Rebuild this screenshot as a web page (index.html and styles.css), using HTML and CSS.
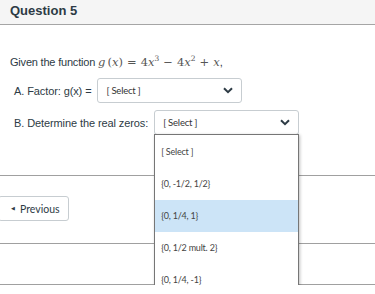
FILE: index.html
```html
<!DOCTYPE html>
<html lang="en">
<head>
    <meta charset="UTF-8">
    <meta name="viewport" content="width=device-width, initial-scale=1.0">
    <title>Question 5</title>
    <link rel="stylesheet" href="styles.css">
</head>
<body>
    <div class="question">
        <div class="question-header">Question 5</div>

        <div class="question-body">
            <p class="prompt">Given the function <span class="math"><i>g</i>&thinsp;(<i>x</i>)<span class="op">=</span>4<i>x</i><sup>3</sup><span class="op">&minus;</span>4<i>x</i><sup>2</sup><span class="op">+</span><i>x</i></span>,</p>

            <div class="answer-row">
                <span class="answer-label">A. Factor: g(x) =</span>
                <div class="select">
                    <span>[ Select ]</span>
                    <svg class="chevron" width="10" height="7" viewBox="0 0 10 7"><path d="M1 1.2 L5 5.2 L9 1.2" fill="none" stroke="#2d3b45" stroke-width="2"/></svg>
                </div>
            </div>

            <div class="answer-row">
                <span class="answer-label">B. Determine the real zeros:</span>
                <div class="select open">
                    <span>[ Select ]</span>
                    <svg class="chevron" width="10" height="7" viewBox="0 0 10 7"><path d="M1 1.2 L5 5.2 L9 1.2" fill="none" stroke="#2d3b45" stroke-width="2"/></svg>

                    <!-- open option list -->
                    <ul class="options">
                        <li>[ Select ]</li>
                        <li>{0, -1/2, 1/2}</li>
                        <li class="hover">{0, 1/4, 1}</li>
                        <li>{0, 1/2 mult. 2}</li>
                        <li>{0, 1/4, -1}</li>
                    </ul>
                </div>
            </div>
        </div>
    </div>

    <hr class="divider first">

    <div class="nav">
        <button class="nav-btn"><span class="arrow">&#9664;</span> Previous</button>
    </div>

    <hr class="divider">
    <hr class="divider last">
</body>
</html>
```

FILE: styles.css
```css
* {
    margin: 0;
    padding: 0;
    box-sizing: border-box;
}

body {
    font-family: 'Liberation Sans', Arial, sans-serif;
    color: #2d3b45;
    background: #fff;
    overflow: hidden;
}

.question-header {
    height: 25px;
    padding: 3px 10px 0;
    background: #f5f5f5;
    border-bottom: 1px solid #a5a5a5;
    font-size: 13px;
    font-weight: bold;
    line-height: 16px;
    color: #2d3b45;
}

.question-body {
    padding: 29px 10px 0;
    font-size: 11px;
}

.prompt {
    line-height: 16px;
    margin-bottom: 8px;
    letter-spacing: -0.2px;
}

.math {
    font-family: 'DejaVu Serif', 'Liberation Serif', serif;
    font-size: 11.5px;
    color: #555;
    letter-spacing: 0;
}

.math .op {
    margin: 0 4px;
}

.math sup {
    font-size: 7.5px;
    vertical-align: 5px;
    line-height: 0;
}

.answer-row {
    display: flex;
    align-items: center;
    gap: 6px;
    padding-left: 4px;
    margin-bottom: 7px;
    letter-spacing: -0.1px;
}

.select {
    position: relative;
    width: 145px;
    height: 25px;
    display: flex;
    align-items: center;
    justify-content: space-between;
    padding: 0 8px;
    border: 1px solid #c7cdd1;
    border-radius: 3px;
    background: #fff;
    font-family: Lato, sans-serif;
    font-size: 9.5px;
    letter-spacing: -0.2px;
    color: #333;
}

.select .chevron {
    display: block;
}

.options {
    position: absolute;
    top: 100%;
    left: -1px;
    width: 145px;
    padding-top: 1px;
    list-style: none;
    background: #fff;
    border: 1px solid #767676;
    border-bottom: none;
    box-shadow: 1px 1px 3px rgba(0, 0, 0, 0.25);
    z-index: 10;
}

.options li {
    height: 32px;
    line-height: 32px;
    padding-left: 6px;
    font-family: Lato, sans-serif;
    font-size: 9px;
    color: #444;
}

.options li.hover {
    background: #cce4f7;
}

.divider {
    border: none;
    border-top: 1px solid #a0a0a0;
}

.divider.first {
    margin-top: 40px;
}

.nav {
    padding: 20px 0 22px;
}

.nav-btn {
    display: flex;
    align-items: center;
    gap: 5px;
    height: 25px;
    width: 71px;
    margin-left: -2px;
    padding: 0 0 0 12px;
    background: #fff;
    border: 1px solid #c7cdd1;
    border-radius: 3px;
    font-family: Lato, sans-serif;
    font-size: 10.5px;
    color: #2d3b45;
}

.nav-btn .arrow {
    font-size: 4.5px;
}

.divider.last {
    margin-top: 40px;
}
```
